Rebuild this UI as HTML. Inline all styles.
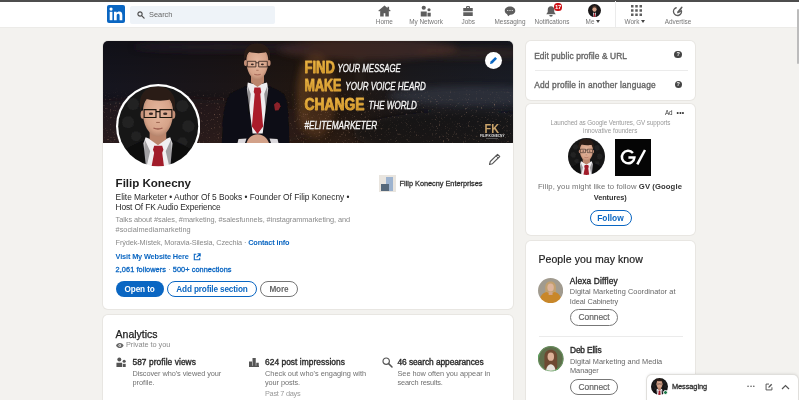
<!DOCTYPE html>
<html lang="en">
<head>
<meta charset="utf-8">
<title>Filip Konecny | LinkedIn</title>
<style>
*{box-sizing:border-box;margin:0;padding:0}
html,body{width:799px;height:400px;overflow:hidden;background:#f3f2ef;font-family:"Liberation Sans",sans-serif;color:#1d1d1d}
.abs{position:absolute}
.t{position:absolute;white-space:nowrap;line-height:1}
#topline{left:0;top:0;width:799px;height:1.5px;background:#4d4d4d}
#nav{left:0;top:1px;width:799px;height:26.600px;background:#fff;border-bottom:1px solid #ecebe8}
.card{position:absolute;background:#fff;border-radius:5px;box-shadow:0 0 0 1px #e8e6e2}
.navlbl{font-size:6.4px;color:#767676;margin-top:.5px;text-align:center;transform:translateX(-50%)}
.blue{color:#0a66c2}
.b{font-weight:bold}
.grey{color:#777}
.btn{position:absolute;border-radius:10px;height:17px;line-height:15px;font-size:8.4px;font-weight:bold;text-align:center;white-space:nowrap}
</style>
</head>
<body><div id="root" style="position:absolute;left:0;top:0;width:799px;height:400px;filter:blur(.350px)">
<div class="abs" id="nav"></div>
<div class="abs" id="topline"></div>


<!-- MAIN CARD -->
<div class="card" id="main" style="left:103px;top:41px;width:410px;height:268px;overflow:hidden">
  <svg class="abs" id="banner" style="left:0;top:0" width="410" height="102" viewBox="0 0 410 102">
    <defs>
      <linearGradient id="bgx" x1="0" x2="1" y1="0" y2="0">
        <stop offset="0" stop-color="#15151f"/><stop offset=".3" stop-color="#1b1517"/><stop offset=".55" stop-color="#23170f"/><stop offset=".75" stop-color="#1b1a1e"/><stop offset="1" stop-color="#1a1d26"/>
      </linearGradient>
      <linearGradient id="bgy" x1="0" x2="0" y1="0" y2="1">
        <stop offset="0" stop-color="#000" stop-opacity=".25"/><stop offset=".45" stop-color="#000" stop-opacity="0"/><stop offset="1" stop-color="#3a2418" stop-opacity=".35"/>
      </linearGradient>
      <radialGradient id="glow1"><stop offset="0" stop-color="#a8642c" stop-opacity=".7"/><stop offset="1" stop-color="#a8642c" stop-opacity="0"/></radialGradient>
      <radialGradient id="glow2"><stop offset="0" stop-color="#6a6f86" stop-opacity=".45"/><stop offset="1" stop-color="#6a6f86" stop-opacity="0"/></radialGradient>
      <radialGradient id="glow3"><stop offset="0" stop-color="#6b3a30" stop-opacity=".5"/><stop offset="1" stop-color="#6b3a30" stop-opacity="0"/></radialGradient>
      <filter id="soft3" x="-10%" y="-10%" width="120%" height="120%"><feGaussianBlur stdDeviation="3"/></filter>
      <filter id="spk" x="0" y="0" width="100%" height="100%"><feTurbulence type="fractalNoise" baseFrequency=".55" numOctaves="2" seed="7" result="n"/><feColorMatrix in="n" type="matrix" values="0 0 0 0 .75  0 0 0 0 .45  0 0 0 0 .3  2.2 2.2 0 0 -2.55"/><feGaussianBlur stdDeviation=".450"/></filter>
      <linearGradient id="spkfade" x1="0" x2="0" y1="0" y2="1"><stop offset="0" stop-color="#fff" stop-opacity="0"/><stop offset=".45" stop-color="#fff" stop-opacity="0"/><stop offset=".6" stop-color="#fff" stop-opacity="1"/><stop offset="1" stop-color="#fff" stop-opacity="1"/></linearGradient><mask id="spkmask"><rect width="410" height="102" fill="url(#spkfade)"/></mask>
      <filter id="soft" x="-5%" y="-5%" width="110%" height="110%"><feGaussianBlur stdDeviation="0.450"/></filter>
      <radialGradient id="skin" cx=".5" cy=".45" r=".6"><stop offset="0" stop-color="#e6b89f"/><stop offset=".7" stop-color="#d6a389"/><stop offset="1" stop-color="#a97a63"/></radialGradient>
      <linearGradient id="gold" x1="0" x2="0" y1="0" y2="1"><stop offset="0" stop-color="#f3c04a"/><stop offset="1" stop-color="#c98b1f"/></linearGradient>
    </defs>
    <rect width="410" height="102" fill="url(#bgx)"/>
    <rect width="410" height="102" fill="url(#bgy)"/>
    <g filter="url(#soft3)">
    <ellipse cx="265" cy="8" rx="90" ry="11" fill="#5a3a30" opacity=".5"/><ellipse cx="370" cy="12" rx="60" ry="6" fill="#4a2c24" opacity=".4"/>
    <ellipse cx="120" cy="6" rx="90" ry="5" fill="#2b2030" opacity=".5"/>
    <ellipse cx="70" cy="84" rx="150" ry="26" fill="#3a2626" opacity=".26"/>
    <ellipse cx="370" cy="55" rx="85" ry="10" fill="#363b4a" opacity=".6"/>
    <ellipse cx="360" cy="92" rx="110" ry="22" fill="#0f0f15" opacity=".6"/>
    <ellipse cx="213" cy="55" rx="20" ry="42" fill="#8a5424" opacity=".32"/>
    <rect x="197" y="22" width="7" height="66" fill="#b97a30" opacity=".14"/>
    <rect x="256" y="18" width="1.500" height="50" fill="#9a8a78" opacity=".3"/>
    </g>
    <rect width="410" height="102" filter="url(#spk)" mask="url(#spkmask)" opacity=".38"/>
    <!-- standing man -->
    <g id="man" filter="url(#soft)">
      <path d="M118.800 102L119.500 85C120 72 122 60 127 53 131 49.500 138 47.500 142.500 45H166.500C171 47.500 177 49.500 181 53 185 60 185.500 72 186 85L186.300 102z" fill="#0e0d12"/>
      <path d="M144.800 41.500l9.600 2.500 9.600-2.500 1.200 6-5.500 45H149.600l-5.700-45z" fill="#efedef"/>
      <path d="M151.400 46.500h6l.900 4.500-1 2 2.800 32.500-5.600 7.500-5.600-7.500 2.800-32.500-1-2z" fill="#aa1c2b"/>
      <path d="M144.300 44l3.500 9-2 20zM164.700 44l-3.500 9 2 20z" fill="#0e0d12" opacity=".4"/>
      <path d="M148 30h13v11.500l-6.500 4.500-6.500-4.500z" fill="#bb856c"/>
      <ellipse cx="142.600" cy="22" rx="1.600" ry="3" fill="#c48f77"/><ellipse cx="166" cy="22" rx="1.600" ry="3" fill="#c48f77"/>
      <path d="M143.300 20c0-9 4.500-13.500 11-13.500s11 4.500 11 13.500c0 9.500-4.500 18.800-11 18.800s-11-9.300-11-18.800z" fill="url(#skin)"/>
      <path d="M141.500 19.500c-2-11 3.500-17 12.800-17s14.800 6 12.300 17c-.500-4-1.800-6.500-3.300-8.500-3.500 1.500-11.500 1.500-17 0-2 2-3.800 4.500-4.800 8.500z" fill="#2b1d17"/>
      <ellipse cx="149.300" cy="23.300" rx="1.500" ry=".900" fill="#3a2a26"/><ellipse cx="159.400" cy="23.300" rx="1.500" ry=".900" fill="#3a2a26"/>
      <path d="M144.300 20.300h8.600v5.600h-8.600zM155.700 20.300h8.600v5.600h-8.600zM152.900 21.800h2.800" fill="none" stroke="#241713" stroke-width=".750"/>
      <path d="M153.200 29.300h2.400" stroke="#a06a55" stroke-width=".800"/><path d="M151.300 33.300c2 .800 4.400.800 6.400 0" fill="none" stroke="#9a5a4c" stroke-width=".900"/>
      <path d="M171 63.500l3-2.500 2.500 1.200 1 3-2 4-3.500.300z" fill="#8c2029"/>
      <path d="M143.500 102c1.500-5 5.500-8.700 11-8.700s9.700 3.700 11.500 8.700z" fill="#d2a189"/>
      <path d="M134.500 102l1-4 8-.500-1.500 4.500zM175.500 102l-1-4-8-.500 1.500 4.500z" fill="#dcd9dd"/>
    </g>
    <!-- slogan -->
    <g font-family="'Liberation Sans',sans-serif">
      <g font-size="16" font-weight="bold" fill="url(#gold)" stroke="#dca43a" stroke-width=".950" stroke-linejoin="round">
      <text x="201.600" y="32.300" textLength="30.200" lengthAdjust="spacingAndGlyphs">FIND</text>
      <text x="201.600" y="50.300" textLength="36.800" lengthAdjust="spacingAndGlyphs">MAKE</text>
      <text x="201.600" y="68.800" textLength="59.800" lengthAdjust="spacingAndGlyphs">CHANGE</text>
      </g>
      <g font-size="11.500" font-style="italic" fill="#f6f6f6" stroke="#f6f6f6" stroke-width=".350">
      <text x="234.500" y="31.200" textLength="63.300" lengthAdjust="spacingAndGlyphs">YOUR MESSAGE</text>
      <text x="242.300" y="48.800" textLength="80.600" lengthAdjust="spacingAndGlyphs">YOUR VOICE HEARD</text>
      <text x="265.600" y="67.500" textLength="48.100" lengthAdjust="spacingAndGlyphs">THE WORLD</text>
      <text x="201.400" y="87.700" font-size="11" textLength="72.800" lengthAdjust="spacingAndGlyphs">#ELITEMARKETER</text>
      </g>
      <text x="381.500" y="91.600" font-size="13.500" font-weight="bold" fill="#c9a36a" textLength="14.500" lengthAdjust="spacingAndGlyphs">FK</text>
      <text x="377" y="95.900" font-size="3.200" font-weight="bold" fill="#e0e0e0" textLength="24.500" lengthAdjust="spacingAndGlyphs">FILIP KONECNY</text>
      <rect x="383" y="97.300" width="12" height=".600" fill="#bbb" opacity=".6"/>
    </g>
  </svg>
  <!-- edit banner btn -->
  <div class="abs" style="left:382.200px;top:10.500px;width:17.200px;height:17.200px;border-radius:50%;background:#fff"></div>
  <svg class="abs" style="left:386.300px;top:14.600px" width="9" height="9" viewBox="0 0 9 9"><path d="M1 8l.600-2.400L6.200 1l1.800 1.800L3.400 7.400z" fill="#0a66c2"/></svg>
  <!-- avatar -->
  <svg class="abs" style="left:12.700px;top:43.300px" width="84.400" height="84.400" viewBox="0 0 84 84">
    <defs><filter id="soft2" x="-5%" y="-5%" width="110%" height="110%"><feGaussianBlur stdDeviation="0.500"/></filter><clipPath id="cav"><circle cx="42" cy="42" r="39.800"/></clipPath></defs>
    <circle cx="42" cy="42" r="42" fill="#fff"/>
    <g clip-path="url(#cav)"><g id="avface" filter="url(#soft2)">
      <rect width="84" height="84" fill="#191919"/>
      <g fill="#212122"><circle cx="12" cy="38" r="6"/><circle cx="72" cy="42" r="6"/><circle cx="66" cy="22" r="6"/><circle cx="17" cy="20" r="6"/><circle cx="20" cy="52" r="5"/><circle cx="66" cy="58" r="5"/><circle cx="42" cy="6" r="5"/></g>
      <path d="M0 84V72c3-5 12-9.500 29-17h26c17 7.500 25 12 29 17v12z" fill="#0e0d11"/>
      <path d="M29.500 53l12.200 5 12.200-5 2.300 6-2.200 25H30l-2.700-25z" fill="#f1eff1"/>
      <path d="M38 61.500h8l1.200 4-1.200 3 2 15.500H35l3-15.500-1.200-3z" fill="#a11b29"/>
      <path d="M28.500 55l5.500 12-4 17h-3zM55 55l-5.500 12 4 17h3z" fill="#0e0d11" opacity=".35"/>
      <path d="M33.500 42h16.500v13l-8.200 6-8.300-6z" fill="#bb856c"/>
      <ellipse cx="26.500" cy="30.500" rx="2" ry="4" fill="#c48f77"/><ellipse cx="57" cy="30.500" rx="2" ry="4" fill="#c48f77"/>
      <path d="M26.800 28c0-12 6-18.500 15-18.500s15 6.500 15 18.500c0 12.500-6 24-15 24s-15-11.500-15-24z" fill="url(#skin)"/>
      <path d="M24.500 27.500c-3-17 4.500-25 17-25s20 10 16.500 25c-.700-5.500-2.300-9.500-4.300-12-5 1.500-16 1.500-23.200-.500-2.700 2.700-5 6.500-6 12.500z" fill="#2b1d17"/>
      <ellipse cx="34.800" cy="29.600" rx="2.100" ry="1.200" fill="#3a2a26"/><ellipse cx="49" cy="29.600" rx="2.100" ry="1.200" fill="#3a2a26"/>
      <path d="M28 25.500h11.800v7.800H28zM43.800 25.500h11.800v7.800H43.800zM39.800 27.500h4" fill="none" stroke="#1c1311" stroke-width="1.150"/>
      <path d="M40 38.300h3.600" stroke="#a06a55" stroke-width="1.100"/><path d="M37.300 43.800c2.800 1.200 6.200 1.200 9 0" fill="none" stroke="#9a5a4c" stroke-width="1.300"/>
    </g></g>
  </svg>
  <!-- pencil -->
  <svg class="abs" style="left:385px;top:112px" width="13" height="13" viewBox="0 0 13 13"><path d="M1.500 11.500l.800-3L9.500 1.300l2.200 2.200-7.200 7.200z" fill="none" stroke="#555" stroke-width="1.100" stroke-linejoin="round"/><path d="M8 2.800l2.200 2.200" stroke="#555" stroke-width="1"/></svg>

  <!-- profile text -->
  <div class="t" id="pname" style="letter-spacing:-0.047px;left:12.61px;top:136.19px;font-size:11.600px;font-weight:bold;color:#1d1d1d">Filip Konecny</div>
  <div class="t" style="letter-spacing:-0.019px;left:12.61px;top:151.90px;font-size:8.400px;color:#2a2a2a">Elite Marketer • Author Of 5 Books • Founder Of Filip Konecny •</div>
  <div class="t" style="letter-spacing:-0.146px;left:12.61px;top:161.90px;font-size:8.400px;color:#2a2a2a">Host Of FK Audio Experience</div>
  <div class="t grey" style="letter-spacing:-0.062px;left:12.61px;top:175.19px;font-size:7.350px;color:#8a8a8a">Talks about #sales, #marketing, #salesfunnels, #instagrammarketing, and</div>
  <div class="t grey" style="letter-spacing:-0.006px;left:12.61px;top:184.79px;font-size:7.350px;color:#8a8a8a">#socialmediamarketing</div>
  <div class="t" style="letter-spacing:-0.129px;left:12.61px;top:198.38px;font-size:7.350px;color:#8a8a8a">Frýdek-Místek, Moravia-Silesia, Czechia · <span class="blue b">Contact info</span></div>
  <div class="t blue b" style="letter-spacing:-0.146px;left:12.61px;top:212.19px;font-size:7.350px">Visit My Website Here</div>
  <svg class="abs" style="left:89.500px;top:211.500px" width="8" height="8" viewBox="0 0 8 8"><path d="M3.300 1.300H1.300v5.400h5.400V4.700" fill="none" stroke="#0a66c2" stroke-width="1.100"/><path d="M4.500.800h2.700v2.700M7.200.800L3.600 4.400" fill="none" stroke="#0a66c2" stroke-width="1.100"/></svg>
  <div class="t blue" style="letter-spacing:0.067px;left:12.61px;top:225.19px;font-size:7.350px"><span style="-webkit-text-stroke:.300px #0a66c2">2,061 followers</span> <span style="color:#888"> · </span><span style="-webkit-text-stroke:.300px #0a66c2">500+ connections</span></div>
  <div class="btn" style="left:12.600px;top:240px;width:48px;height:16px;background:#0a66c2;color:#fff;line-height:18px;font-size:8.200px;letter-spacing:-.100px">Open to</div>
  <div class="btn" style="left:64.400px;top:240px;width:89.200px;height:16px;line-height:16px;font-size:8.200px;letter-spacing:-.150px;border:1px solid #0a66c2;color:#0a66c2">Add profile section</div>
  <div class="btn" style="left:157.400px;top:240px;width:37.200px;height:16px;line-height:16px;font-size:8.200px;letter-spacing:-.100px;border:1px solid #777;color:#666">More</div>

  <!-- company -->
  <div class="abs" style="left:275.600px;top:133.600px;width:17px;height:17px;background:#e9e5df"></div>
  <div class="abs" style="left:283px;top:135.500px;width:7px;height:14px;background:#9db3cf"></div>
  <div class="abs" style="left:278px;top:143px;width:8px;height:7px;background:#56687a"></div>
  <div class="t" style="-webkit-text-stroke:.300px #333;letter-spacing:-0.019px;left:296.61px;top:139.19px;font-size:7.350px;color:#333">Filip Konecny Enterprises</div>
</div>

<!-- ANALYTICS CARD -->
<div class="card" id="analytics" style="left:103px;top:314.500px;width:410px;height:100px">
  <div class="t" style="letter-spacing:-0.002px;left:12.60px;top:14.02px;font-size:10.500px;color:#1d1d1d;-webkit-text-stroke:.250px #1d1d1d">Analytics</div>
  <svg class="abs" style="left:13px;top:28.300px" width="7.600" height="5.200" viewBox="0 0 18 12"><path d="M9 0C4.500 0 1.500 3 0 6c1.500 3 4.500 6 9 6s7.500-3 9-6c-1.500-3-4.500-6-9-6z" fill="#666"/><circle cx="9" cy="6" r="3" fill="#fff"/><circle cx="9" cy="6" r="1.500" fill="#666"/></svg>
  <div class="t" style="letter-spacing:-0.050px;left:23.00px;top:26.89px;font-size:7.350px;color:#8a8a8a">Private to you</div>

  <svg class="abs" style="left:13.300px;top:42.300px" width="10.600" height="10.600" viewBox="0 0 24 24"><circle cx="7.500" cy="5.500" r="4.500" fill="#555"/><circle cx="18.500" cy="9.500" r="3.500" fill="#555"/><path d="M1 13h13v10H1z" fill="#555"/><path d="M15.500 15.500H22V23h-6.500z" fill="#555"/></svg>
  <div class="t" style="-webkit-text-stroke:.350px #2a2a2a;letter-spacing:0.071px;left:29.41px;top:43.40px;font-size:8.400px;color:#2a2a2a">587 profile views</div>
  <div class="t" style="letter-spacing:-0.061px;left:29.41px;top:55.29px;font-size:7.350px;color:#707070">Discover who's viewed your</div>
  <div class="t" style="letter-spacing:0.030px;left:29.41px;top:64.88px;font-size:7.350px;color:#707070">profile.</div>

  <svg class="abs" style="left:145.500px;top:43px" width="10.500" height="9" viewBox="0 0 21 18"><path d="M0 7h6v9H0zM7 0h6.500v16H7zM14.500 9.500h5v6.500h-5zM0 15.500h21V18H0z" fill="#555"/></svg>
  <div class="t" style="-webkit-text-stroke:.350px #2a2a2a;letter-spacing:0.043px;left:162.00px;top:43.40px;font-size:8.400px;color:#2a2a2a">624 post impressions</div>
  <div class="t" style="letter-spacing:-0.000px;left:162.00px;top:55.29px;font-size:7.350px;color:#707070">Check out who's engaging with</div>
  <div class="t" style="letter-spacing:-0.084px;left:162.00px;top:64.88px;font-size:7.350px;color:#707070">your posts.</div>
  <div class="t" style="letter-spacing:-0.280px;left:162.00px;top:75.29px;font-size:7.350px;color:#999">Past 7 days</div>

  <svg class="abs" style="left:278.500px;top:42.500px" width="11" height="11" viewBox="0 0 11 11"><circle cx="4.200" cy="4.200" r="3.200" fill="none" stroke="#555" stroke-width="1.200"/><path d="M6.600 6.600L10 10" stroke="#555" stroke-width="1.500" stroke-linecap="round"/></svg>
  <div class="t" style="-webkit-text-stroke:.350px #2a2a2a;letter-spacing:-0.073px;left:294.50px;top:43.40px;font-size:8.400px;color:#2a2a2a">46 search appearances</div>
  <div class="t" style="letter-spacing:-0.026px;left:294.50px;top:55.29px;font-size:7.350px;color:#707070">See how often you appear in</div>
  <div class="t" style="letter-spacing:-0.170px;left:294.50px;top:64.88px;font-size:7.350px;color:#707070">search results.</div>
</div>

<!-- RIGHT: edit profile card -->
<div class="card" style="left:526px;top:41px;width:169px;height:58.500px">
  <div class="t" style="-webkit-text-stroke:.350px #666;letter-spacing:0.081px;left:8.21px;top:11.00px;font-size:8.400px;color:#666">Edit public profile &amp; URL</div>
  <div class="abs" style="left:148.300px;top:9.800px;width:7.500px;height:7.500px;border-radius:50%;background:#444"></div>
  <div class="t b" style="left:150.400px;top:10.800px;font-size:5.500px;color:#fff">?</div>
  <div class="abs" style="left:8.500px;top:29px;width:153px;height:1px;background:#ebebeb"></div>
  <div class="t" style="-webkit-text-stroke:.350px #666;letter-spacing:0.167px;left:8.21px;top:40.30px;font-size:8.400px;color:#666">Add profile in another language</div>
  <div class="abs" style="left:148.500px;top:39.500px;width:7.500px;height:7.500px;border-radius:50%;background:#444"></div>
  <div class="t b" style="left:150.600px;top:40.500px;font-size:5.500px;color:#fff">?</div>
</div>

<!-- RIGHT: ad card -->
<div class="card" style="left:526px;top:103.500px;width:169px;height:131.500px">
  <div class="t" style="letter-spacing:-0.258px;left:139.00px;top:6.88px;font-size:6.300px;color:#333">Ad</div>
  <div class="t b" style="left:150.500px;top:6.200px;font-size:6.800px;color:#333;letter-spacing:.300px">•••</div>
  <div class="t" style="letter-spacing:-0.086px;left:84.41px;top:16.88px;font-size:6.300px;color:#999;transform:translateX(-50%)">Launched as Google Ventures, GV supports</div>
  <div class="t" style="letter-spacing:-0.017px;left:84.16px;top:24.97px;font-size:6.300px;color:#999;transform:translateX(-50%)">innovative founders</div>
  <svg class="abs" style="left:42px;top:34.500px" width="37" height="37" viewBox="0 0 84 84"><defs><clipPath id="cav2"><circle cx="42" cy="42" r="42"/></clipPath></defs><g clip-path="url(#cav2)"><use href="#avface"/></g></svg>
  <div class="abs" style="left:88.500px;top:35.700px;width:36.700px;height:36.700px;background:#050505"></div>
  <svg class="abs" style="left:88.500px;top:35.700px" width="36.700" height="36.700" viewBox="0 0 36.700 36.700"><path d="M17.93 13.95A6.3 6.3 0 1 0 19.40 18.60H13.40" fill="none" stroke="#fff" stroke-width="2.500"/><path d="M22.300 25.300L30 11" stroke="#fff" stroke-width="2.500"/></svg>
  <div class="t" style="letter-spacing:0.090px;left:84.05px;top:79.79px;font-size:7.700px;color:#707070;transform:translateX(-50%)">Filip, you might like to follow <span class="b" style="color:#333">GV (Google</span></div>
  <div class="t b" style="letter-spacing:-0.064px;left:84.16px;top:90.29px;font-size:7.350px;color:#333;transform:translateX(-50%)">Ventures)</div>
  <div class="btn" style="left:63.500px;top:106px;width:42px;height:16px;line-height:14px;border:1px solid #0a66c2;color:#0a66c2">Follow</div>
</div>

<!-- RIGHT: people card -->
<div class="card" style="left:526px;top:241px;width:169px;height:170px">
  <div class="t" style="letter-spacing:0.093px;left:12.41px;top:12.82px;font-size:10.500px;color:#1d1d1d;-webkit-text-stroke:.200px #1d1d1d">People you may know</div>
  <svg class="abs" style="left:12.300px;top:36.600px" width="25.200" height="25.200" viewBox="0 0 26 26"><defs><clipPath id="cp1"><circle cx="13" cy="13" r="13"/></clipPath><filter id="soft4"><feGaussianBlur stdDeviation=".500"/></filter></defs><g clip-path="url(#cp1)"><g filter="url(#soft4)"><rect x="-2" y="-2" width="30" height="30" fill="#a19b8f"/><path d="M7.500 18V9.500c0-4 2.500-6 5.500-6s5.500 2 5.500 6V18z" fill="#c2a06e"/><ellipse cx="13" cy="9.800" rx="3.300" ry="4.200" fill="#ddb49b"/><path d="M1 28c0-8 3-12.500 8-13.500l4 2 4-2c5 1 8 5.500 8 13.500z" fill="#c8872b"/><path d="M11 14.500h4v3h-4z" fill="#d2a78e"/></g></g></svg>
  <div class="t" style="-webkit-text-stroke:.350px #2a2a2a;letter-spacing:0.112px;left:43.86px;top:35.70px;font-size:8.400px;color:#2a2a2a">Alexa Diffley</div>
  <div class="t" style="letter-spacing:0.074px;left:43.86px;top:46.88px;font-size:7.350px;color:#666">Digital Marketing Coordinator at</div>
  <div class="t" style="letter-spacing:-0.071px;left:43.86px;top:57.49px;font-size:7.350px;color:#666">Ideal Cabinetry</div>
  <div class="btn" style="left:43.800px;top:68.300px;width:48.500px;height:16.700px;line-height:14.700px;border:1px solid #777;color:#666;font-weight:normal;-webkit-text-stroke:.200px #666">Connect</div>
  <div class="abs" style="left:12.500px;top:95px;width:144.500px;height:1px;background:#ebebeb"></div>
  <svg class="abs" style="left:12.100px;top:105.400px" width="25.600" height="25.600" viewBox="0 0 26 26"><defs><clipPath id="cp2"><circle cx="13" cy="13" r="13"/></clipPath></defs><g clip-path="url(#cp2)"><g filter="url(#soft4)"><rect x="-2" y="-2" width="30" height="30" fill="#5f6e4b"/><path d="M6.500 24V10.500c0-4.500 3-6.800 6.500-6.800s6.500 2.300 6.500 6.800V24z" fill="#6e4a30"/><ellipse cx="13" cy="10.800" rx="3.300" ry="4.200" fill="#ddb198"/><path d="M8 28c0-6 2-9.500 5-9.500s5 3.500 5 9.500z" fill="#e6e2dc"/></g><path d="M1.300 8A12.300 12.300 0 0 0 21.500 22.500" fill="none" stroke="#4a9a50" stroke-width="2.600"/><circle cx="13" cy="13" r="12.500" fill="none" stroke="#6aa76a" stroke-width="1" opacity=".7"/></g></svg>
  <div class="t" style="-webkit-text-stroke:.350px #2a2a2a;letter-spacing:-0.172px;left:44.00px;top:104.69px;font-size:8.400px;color:#2a2a2a">Deb Ellis</div>
  <div class="t" style="letter-spacing:0.043px;left:44.00px;top:116.79px;font-size:7.350px;color:#666">Digital Marketing and Media</div>
  <div class="t" style="letter-spacing:-0.028px;left:44.00px;top:126.38px;font-size:7.350px;color:#666">Manager</div>
  <div class="btn" style="left:43.800px;top:137.500px;width:48.500px;height:16.500px;line-height:14.500px;border:1px solid #777;color:#666;font-weight:normal;-webkit-text-stroke:.200px #666">Connect</div>
</div>

<!-- MESSAGING BAR -->
<div class="abs" id="msg" style="left:646.500px;top:374.500px;width:151px;height:30px;background:#fff;border-radius:5px 5px 0 0;box-shadow:0 0 0 1px #e0dfdc,0 -1px 3px rgba(0,0,0,.12)">
  <svg class="abs" style="left:4px;top:3.500px" width="17" height="17" viewBox="0 0 84 84"><defs><clipPath id="cav3"><circle cx="42" cy="42" r="42"/></clipPath></defs><g clip-path="url(#cav3)"><use href="#avface"/></g></svg>
  <div class="abs" style="left:16.500px;top:15.500px;width:5px;height:5px;border-radius:50%;background:#1f7a4a;border:.800px solid #fff"></div>
  <div class="t" style="-webkit-text-stroke:.300px #333;letter-spacing:-0.083px;left:25.50px;top:8.85px;font-size:7.400px;color:#2a2a2a">Messaging</div>
  <div class="t" style="left:100.500px;top:8.200px;font-size:6px;color:#666;letter-spacing:.800px">•••</div>
  <svg class="abs" style="left:118px;top:8px" width="8" height="8" viewBox="0 0 9 9"><path d="M4.500 1.200H1.200v6.600h6.600V4.800" fill="none" stroke="#555" stroke-width="1.100"/><path d="M3.600 5.400l.400-1.500L7 .900l1.100 1.100-3 3z" fill="#555"/></svg>
  <svg class="abs" style="left:134px;top:9px" width="9" height="6" viewBox="0 0 9 6"><path d="M1 5l3.500-3.500L8 5" fill="none" stroke="#555" stroke-width="1.200"/></svg>
</div>

<!-- scrollbar thumb -->
<div class="abs" style="left:797px;top:9px;width:1.800px;height:54.500px;background:#bcbcbc;border-radius:1px"></div>

<!-- NAV -->
<div id="navitems">
<svg class="abs" style="left:107px;top:5px" width="18" height="18" viewBox="0 0 18 18"><rect width="18" height="18" rx="2" fill="#0a66c2"/><rect x="2.7" y="6.8" width="2.7" height="8.4" fill="#fff"/><circle cx="4.05" cy="4.1" r="1.6" fill="#fff"/><path d="M7 6.8h2.6v1.2c.5-.9 1.5-1.45 2.7-1.45 2.4 0 3 1.5 3 3.7v4.95h-2.7v-4.4c0-1.1-.1-2.1-1.4-2.1s-1.5 1-1.5 2.05v4.45H7z" fill="#fff"/></svg>
<div class="abs" style="left:130px;top:6px;width:145px;height:18px;background:#eef3f8;border-radius:2px"></div>
<svg class="abs" style="left:136.800px;top:10.800px" width="8" height="8" viewBox="0 0 9 9"><circle cx="3.400" cy="3.400" r="2.400" fill="none" stroke="#505050" stroke-width="1.300"/><path d="M5.200 5.200L8 8" stroke="#505050" stroke-width="1.400" stroke-linecap="round"/></svg>
<div class="t" style="left:149px;top:11px;font-size:7.4px;color:#666">Search</div>

<!-- nav icons -->
<svg class="abs" style="left:378px;top:4.5px" width="13" height="12" viewBox="0 0 24 22"><path d="M12 1L0.5 10.5l1.6 1.6L4 10.6V21h6.5v-6h3v6H20V10.6l1.9 1.5 1.6-1.6-3-2.5V3h-3v2.6z" fill="#5e5e5e"/></svg>
<div class="t navlbl" style="left:384.3px;top:18px">Home</div>

<svg class="abs" style="left:420px;top:4.5px" width="12" height="12" viewBox="0 0 24 24"><circle cx="7.5" cy="5.5" r="4.2" fill="#5e5e5e"/><circle cx="18" cy="9.5" r="3.2" fill="#5e5e5e"/><path d="M1.5 13h12v10h-12z" fill="#5e5e5e"/><path d="M15 15.5h6.5V23H15z" fill="#5e5e5e"/></svg>
<div class="t navlbl" style="left:426px;top:18px">My Network</div>

<svg class="abs" style="left:462px;top:4.5px" width="12" height="12" viewBox="0 0 24 24"><path d="M8 6V4.5A2.5 2.5 0 0 1 10.500 2h3A2.5 2.5 0 0 1 16 4.500V6h5.500v6.500H2.500V6zM10 6h4V4.500h-4z" fill="#5e5e5e"/><path d="M2.500 14.500h19V22h-19z" fill="#5e5e5e"/></svg>
<div class="t navlbl" style="left:468.3px;top:18px">Jobs</div>

<svg class="abs" style="left:504px;top:4.5px" width="12" height="12" viewBox="0 0 24 24"><path d="M12 3C6 3 1.500 6.500 1.500 11.500c0 2.800 1.700 5.200 4.300 6.700L8.500 22.500l3.500-3c6 0 10.500-3 10.500-8S18 3 12 3z" fill="#5e5e5e"/><circle cx="7.500" cy="11" r="1.200" fill="#fff"/><circle cx="12" cy="11" r="1.200" fill="#fff"/><circle cx="16.500" cy="11" r="1.200" fill="#fff"/></svg>
<div class="t navlbl" style="left:510px;top:18px">Messaging</div>

<svg class="abs" style="left:545px;top:4.5px" width="12" height="12" viewBox="0 0 24 24"><path d="M12 2.500c-4 0-6.500 3-6.500 7v4.500L2.500 18.500h19L18.500 14V9.500c0-4-2.500-7-6.500-7z" fill="#5e5e5e"/><path d="M8.500 20h7a3.500 3.500 0 0 1-7 0z" fill="#5e5e5e"/></svg>
<div class="abs" style="left:553.500px;top:3px;width:8.800px;height:7.600px;border-radius:3.500px;background:#cc1016"></div>
<div class="t" style="left:554.900px;top:3.900px;font-size:6px;font-weight:bold;color:#fff;letter-spacing:-0.300px">17</div>
<div class="t navlbl" style="left:552px;top:18px">Notifications</div>

<svg class="abs" style="left:587.8px;top:3.800px" width="13" height="13" viewBox="0 0 26 26"><defs><clipPath id="cme"><circle cx="13" cy="13" r="13"/></clipPath></defs><g clip-path="url(#cme)"><rect width="26" height="26" fill="#1a1718"/><ellipse cx="13" cy="10.500" rx="4.200" ry="5.200" fill="#d9a58c"/><path d="M8.500 8.500c0-4 2-5.500 4.500-5.500s4.500 1.500 4.500 5.500c-1.500-2-7.500-2-9 0z" fill="#4a3228"/><path d="M2 26c0-6 4-9 7-9.500l4 3 4-3c3 .5 7 3.500 7 9.500z" fill="#15151a"/><path d="M10 16.500l3 3 3-3-1.200 9.500h-3.600z" fill="#f2f2f2"/><path d="M12.200 18.500h1.600l1 7.500h-3.600z" fill="#b01a2a"/></g></svg>
<div class="t navlbl" style="left:590px;top:18px">Me</div>
<div class="abs" style="left:595.600px;top:20.300px;width:0;height:0;border-left:2.700px solid transparent;border-right:2.700px solid transparent;border-top:3px solid #444"></div>

<div class="abs" style="left:615px;top:1px;width:1px;height:27px;background:#ebebeb"></div>

<svg class="abs" style="left:630.5px;top:5px" width="11" height="11" viewBox="0 0 22 22"><g fill="#5e5e5e"><rect x="0" y="0" width="5" height="5"/><rect x="8.500" y="0" width="5" height="5"/><rect x="17" y="0" width="5" height="5"/><rect x="0" y="8.500" width="5" height="5"/><rect x="8.500" y="8.500" width="5" height="5"/><rect x="17" y="8.500" width="5" height="5"/><rect x="0" y="17" width="5" height="5"/><rect x="8.500" y="17" width="5" height="5"/><rect x="17" y="17" width="5" height="5"/></g></svg>
<div class="t navlbl" style="left:632px;top:18px">Work</div>
<div class="abs" style="left:640.600px;top:20.300px;width:0;height:0;border-left:2.700px solid transparent;border-right:2.700px solid transparent;border-top:3px solid #444"></div>

<svg class="abs" style="left:672px;top:4.500px" width="12" height="12" viewBox="0 0 24 24"><circle cx="11" cy="13" r="8" fill="none" stroke="#5e5e5e" stroke-width="2.800" stroke-dasharray="38 13" transform="rotate(-20 11 13)"/><path d="M10 14L19 3l2.500 1L17 12l3 1-9 4z" fill="#5e5e5e"/></svg>
<div class="t navlbl" style="left:678px;top:18px">Advertise</div>
</div>

</div></body>
</html>
